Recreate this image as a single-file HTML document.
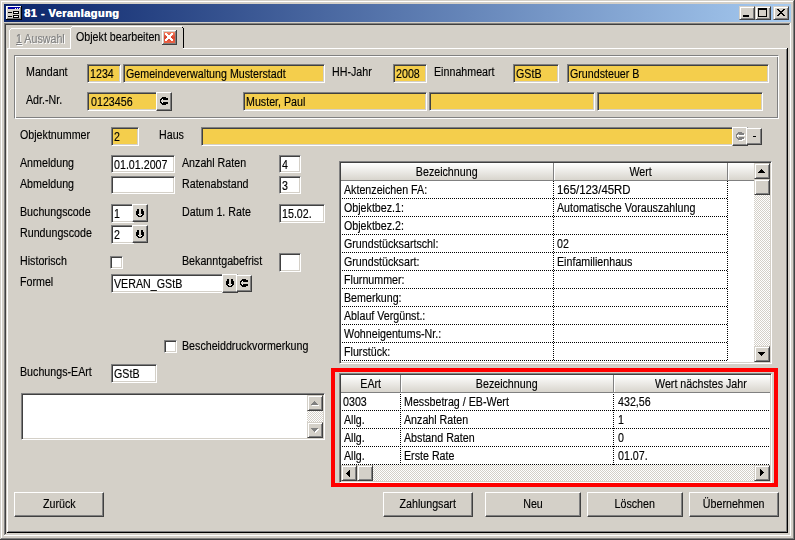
<!DOCTYPE html>
<html><head><meta charset="utf-8"><style>
html,body{margin:0;padding:0;width:795px;height:540px;overflow:hidden;background:#d4d0c8}
body>div,body>svg{position:absolute}
div{box-sizing:border-box}
.t{position:absolute;font-family:"Liberation Sans",sans-serif;font-size:12px;line-height:14px;white-space:nowrap;color:#000;transform:scaleX(0.89);transform-origin:0 0;-webkit-text-stroke:0.15px}
.c{position:absolute;font-family:"Liberation Sans",sans-serif;font-size:12px;line-height:14px;white-space:nowrap;color:#000;text-align:center;-webkit-text-stroke:0.15px}
.c span{display:inline-block;transform:scaleX(0.89);transform-origin:50% 0}
.sk{border:1px solid;border-color:#808080 #fff #fff #808080;box-shadow:inset 1px 1px #404040,inset -1px -1px #d4d0c8}
.rs{background:#d4d0c8;border:1px solid;border-color:#fff #404040 #404040 #fff;box-shadow:inset -1px -1px #808080}
.cb{background:#d4d0c8;border:1px solid;border-color:#d4d0c8 #404040 #404040 #d4d0c8;box-shadow:inset 1px 1px #fff,inset -1px -1px #808080}
.et{border:1px solid;border-color:#808080 #fff #fff #808080;box-shadow:inset 1px 1px #fff,inset -1px -1px #808080}
</style></head><body>
<div style="left:0;top:0;width:795px;height:540px;background:#d4d0c8"></div>
<div style="left:0px;top:0px;width:795px;height:1px;background:#d4d0c8"></div>
<div style="left:1px;top:1px;width:793px;height:1px;background:#ffffff"></div>
<div style="left:1px;top:1px;width:1px;height:538px;background:#ffffff"></div>
<div style="left:793px;top:1px;width:1px;height:538px;background:#808080"></div>
<div style="left:1px;top:538px;width:793px;height:1px;background:#808080"></div>
<div style="left:794px;top:0px;width:1px;height:540px;background:#404040"></div>
<div style="left:0px;top:539px;width:795px;height:1px;background:#404040"></div>
<div style="left:4px;top:4px;width:787px;height:18px;background:linear-gradient(to right,#0a246a,#a6caf0)"></div>
<div style="left:4px;top:23px;width:787px;height:1px;background:#808080"></div>
<div style="left:4px;top:23px;width:1px;height:513px;background:#808080"></div>
<div style="left:5px;top:24px;width:785px;height:1px;background:#404040"></div>
<div style="left:5px;top:24px;width:1px;height:511px;background:#404040"></div>
<div style="left:790px;top:23px;width:1px;height:513px;background:#ffffff"></div>
<div style="left:4px;top:535px;width:787px;height:1px;background:#ffffff"></div>
<div style="left:789px;top:24px;width:1px;height:511px;background:#d4d0c8"></div>
<div style="left:5px;top:534px;width:785px;height:1px;background:#d4d0c8"></div>
<svg style="position:absolute;left:6px;top:6px" width="16" height="14" shape-rendering="crispEdges">
<rect x="0" y="0" width="15" height="13" fill="#d4d0c8"/>
<rect x="0" y="0" width="15" height="1" fill="#ffffff"/><rect x="0" y="0" width="1" height="13" fill="#ffffff"/>
<rect x="15" y="0" width="1" height="14" fill="#000"/><rect x="0" y="13" width="16" height="1" fill="#000"/>
<rect x="14" y="1" width="1" height="12" fill="#808080"/><rect x="1" y="12" width="14" height="1" fill="#808080"/>
<rect x="2" y="1" width="12" height="2" fill="#0000a8"/>
<rect x="9" y="2" width="1" height="1" fill="#fff"/><rect x="11" y="2" width="1" height="1" fill="#fff"/><rect x="13" y="2" width="1" height="1" fill="#fff"/>
<rect x="2" y="6" width="4" height="1" fill="#000"/><rect x="7" y="5" width="6" height="3" fill="#000"/><rect x="8" y="6" width="4" height="1" fill="#fff"/>
<rect x="2" y="10" width="4" height="1" fill="#000"/><rect x="7" y="9" width="6" height="3" fill="#000"/><rect x="8" y="10" width="4" height="1" fill="#fff"/>
</svg>
<div style="left:24px;top:6px;font:bold 11px Liberation Sans;line-height:14px;color:#fff;letter-spacing:0.45px;text-shadow:0.5px 0 0 #fff;white-space:nowrap">81 - Veranlagung</div>
<div class="cb" style="left:739px;top:6px;width:16px;height:14px"></div>
<div class="cb" style="left:755px;top:6px;width:16px;height:14px"></div>
<div class="cb" style="left:773px;top:6px;width:16px;height:14px"></div>
<svg style="position:absolute;left:739px;top:6px" width="50" height="14" shape-rendering="crispEdges">
<rect x="4" y="9" width="6" height="2" fill="#000"/>
<rect x="19" y="2" width="9" height="9" fill="#000"/><rect x="20" y="4" width="7" height="6" fill="#d4d0c8"/>
<path d="M38 3 h2 v1 h1 v1 h2 v-1 h1 v-1 h2 v1 h-1 v1 h-1 v1 h-1 v1 h1 v1 h1 v1 h1 v1 h-2 v-1 h-1 v-1 h-2 v1 h-1 v1 h-2 v-1 h1 v-1 h1 v-1 h1 v-1 h-1 v-1 h-1 v-1 h-1 z" fill="#000"/>
</svg>
<div style="left:7px;top:48px;width:781px;height:1px;background:#ffffff"></div>
<div style="left:7px;top:48px;width:1px;height:485px;background:#ffffff"></div>
<div style="left:786px;top:49px;width:1px;height:483px;background:#808080"></div>
<div style="left:787px;top:48px;width:1px;height:485px;background:#000"></div>
<div style="left:8px;top:531px;width:779px;height:1px;background:#808080"></div>
<div style="left:7px;top:532px;width:781px;height:1px;background:#000"></div>
<div style="left:9px;top:30px;width:1px;height:18px;background:#ffffff"></div>
<div style="left:10px;top:29px;width:1px;height:1px;background:#ffffff"></div>
<div style="left:11px;top:28px;width:59px;height:1px;background:#ffffff"></div>
<div class="t" style="left:16px;top:32px;color:#808080;text-shadow:1px 1px #fff"><u>1</u> Auswahl</div>
<div style="left:7px;top:49px;width:1px;height:0px;"></div>
<div style="left:70px;top:28px;width:1px;height:21px;background:#ffffff"></div>
<div style="left:71px;top:27px;width:1px;height:1px;background:#ffffff"></div>
<div style="left:72px;top:26px;width:110px;height:1px;background:#ffffff"></div>
<div style="left:71px;top:48px;width:112px;height:1px;background:#d4d0c8"></div>
<div style="left:182px;top:27px;width:1px;height:1px;background:#000"></div>
<div style="left:183px;top:28px;width:1px;height:20px;background:#000"></div>
<div class="t" style="left:76px;top:30px;">Objekt bearbeiten</div>
<svg style="position:absolute;left:162px;top:30px" width="15" height="15" shape-rendering="crispEdges">
<defs><linearGradient id="rg" x1="0" y1="0" x2="0" y2="1"><stop offset="0" stop-color="#f48466"/><stop offset="0.5" stop-color="#d8452e"/><stop offset="1" stop-color="#ec6448"/></linearGradient></defs>
<rect x="0" y="0" width="15" height="15" fill="#404040"/>
<rect x="0" y="0" width="14" height="14" fill="#ffffff"/>
<rect x="1" y="1" width="13" height="13" fill="#808080"/>
<rect x="1" y="1" width="12" height="12" fill="#d4d0c8"/>
<rect x="2" y="2" width="11" height="11" fill="url(#rg)"/>
<g fill="#fff"><rect x="3" y="3" width="1" height="1"/><rect x="4" y="3" width="1" height="1"/><rect x="9" y="3" width="1" height="1"/><rect x="10" y="3" width="1" height="1"/><rect x="3" y="4" width="1" height="1"/><rect x="4" y="4" width="1" height="1"/><rect x="5" y="4" width="1" height="1"/><rect x="8" y="4" width="1" height="1"/><rect x="9" y="4" width="1" height="1"/><rect x="10" y="4" width="1" height="1"/><rect x="4" y="5" width="1" height="1"/><rect x="5" y="5" width="1" height="1"/><rect x="6" y="5" width="1" height="1"/><rect x="7" y="5" width="1" height="1"/><rect x="8" y="5" width="1" height="1"/><rect x="9" y="5" width="1" height="1"/><rect x="5" y="6" width="1" height="1"/><rect x="6" y="6" width="1" height="1"/><rect x="7" y="6" width="1" height="1"/><rect x="8" y="6" width="1" height="1"/><rect x="5" y="7" width="1" height="1"/><rect x="6" y="7" width="1" height="1"/><rect x="7" y="7" width="1" height="1"/><rect x="8" y="7" width="1" height="1"/><rect x="4" y="8" width="1" height="1"/><rect x="5" y="8" width="1" height="1"/><rect x="6" y="8" width="1" height="1"/><rect x="7" y="8" width="1" height="1"/><rect x="8" y="8" width="1" height="1"/><rect x="9" y="8" width="1" height="1"/><rect x="3" y="9" width="1" height="1"/><rect x="4" y="9" width="1" height="1"/><rect x="5" y="9" width="1" height="1"/><rect x="8" y="9" width="1" height="1"/><rect x="9" y="9" width="1" height="1"/><rect x="10" y="9" width="1" height="1"/><rect x="3" y="10" width="1" height="1"/><rect x="4" y="10" width="1" height="1"/><rect x="9" y="10" width="1" height="1"/><rect x="10" y="10" width="1" height="1"/></g>
</svg>
<div class="et" style="left:14px;top:55px;width:765px;height:64px"></div>
<div class="t" style="left:26px;top:65px;">Mandant</div>
<div class="sk" style="left:87px;top:64px;width:34px;height:19px;background:#f4ce4c"></div>
<div class="t" style="left:90px;top:67px;">1234</div>
<div class="sk" style="left:123px;top:64px;width:202px;height:19px;background:#f4ce4c"></div>
<div class="t" style="left:126px;top:67px;">Gemeindeverwaltung Musterstadt</div>
<div class="t" style="left:332px;top:65px;">HH-Jahr</div>
<div class="sk" style="left:393px;top:64px;width:34px;height:19px;background:#f4ce4c"></div>
<div class="t" style="left:396px;top:67px;">2008</div>
<div class="t" style="left:434px;top:65px;">Einnahmeart</div>
<div class="sk" style="left:513px;top:64px;width:46px;height:19px;background:#f4ce4c"></div>
<div class="t" style="left:516px;top:67px;">GStB</div>
<div class="sk" style="left:567px;top:64px;width:202px;height:19px;background:#f4ce4c"></div>
<div class="t" style="left:570px;top:67px;">Grundsteuer B</div>
<div class="t" style="left:26px;top:93px;">Adr.-Nr.</div>
<div class="sk" style="left:87px;top:92px;width:71px;height:19px;background:#f4ce4c"></div>
<div class="t" style="left:91px;top:95px;">0123456</div>
<div class="rs" style="left:156px;top:92px;width:16px;height:19px"></div>
<svg style="position:absolute;left:160px;top:97px" width="9" height="9" shape-rendering="crispEdges"><g fill="#000"><rect x="2" y="0" width="4" height="1"/><rect x="1" y="1" width="7" height="1"/><rect x="0" y="2" width="8" height="1"/><rect x="0" y="3" width="1" height="2"/><rect x="0" y="5" width="8" height="1"/><rect x="1" y="6" width="7" height="1"/><rect x="2" y="7" width="4" height="1"/></g><g fill="#fff"><rect x="2" y="2" width="1" height="1"/><rect x="2" y="5" width="1" height="1"/></g></svg>
<div class="sk" style="left:243px;top:92px;width:184px;height:19px;background:#f4ce4c"></div>
<div class="t" style="left:246px;top:95px;">Muster, Paul</div>
<div class="sk" style="left:429px;top:92px;width:166px;height:19px;background:#f4ce4c"></div>
<div class="sk" style="left:597px;top:92px;width:166px;height:19px;background:#f4ce4c"></div>
<div class="t" style="left:20px;top:128px;">Objektnummer</div>
<div class="sk" style="left:111px;top:127px;width:28px;height:19px;background:#f4ce4c"></div>
<div class="t" style="left:114px;top:130px;">2</div>
<div class="t" style="left:159px;top:128px;">Haus</div>
<div class="sk" style="left:201px;top:127px;width:533px;height:19px;background:#f4ce4c"></div>
<div class="rs" style="left:732px;top:127px;width:16px;height:19px"></div>
<svg style="position:absolute;left:736px;top:132px" width="9" height="9" shape-rendering="crispEdges"><g fill="#fff" transform="translate(1,1)"><g><rect x="2" y="0" width="4" height="1"/><rect x="1" y="1" width="7" height="1"/><rect x="0" y="2" width="8" height="1"/><rect x="0" y="3" width="1" height="2"/><rect x="0" y="5" width="8" height="1"/><rect x="1" y="6" width="7" height="1"/><rect x="2" y="7" width="4" height="1"/></g></g><g fill="#808080"><rect x="2" y="0" width="4" height="1"/><rect x="1" y="1" width="7" height="1"/><rect x="0" y="2" width="8" height="1"/><rect x="0" y="3" width="1" height="2"/><rect x="0" y="5" width="8" height="1"/><rect x="1" y="6" width="7" height="1"/><rect x="2" y="7" width="4" height="1"/></g><g fill="#d4d0c8"><rect x="2" y="2" width="1" height="1"/><rect x="2" y="5" width="1" height="1"/></g></svg>
<div class="rs" style="left:746px;top:128px;width:16px;height:17px"></div>
<div style="left:753px;top:136px;width:3px;height:1px;background:#000"></div>
<div class="t" style="left:20px;top:156px;">Anmeldung</div>
<div class="sk" style="left:111px;top:155px;width:64px;height:18px;background:#ffffff"></div>
<div class="t" style="left:114px;top:158px;">01.01.2007</div>
<div class="t" style="left:20px;top:177px;">Abmeldung</div>
<div class="sk" style="left:111px;top:176px;width:64px;height:18px;background:#ffffff"></div>
<div class="t" style="left:182px;top:156px;">Anzahl Raten</div>
<div class="sk" style="left:279px;top:155px;width:22px;height:18px;background:#ffffff"></div>
<div class="t" style="left:282px;top:158px;">4</div>
<div class="t" style="left:182px;top:177px;">Ratenabstand</div>
<div class="sk" style="left:279px;top:176px;width:22px;height:18px;background:#ffffff"></div>
<div class="t" style="left:282px;top:179px;">3</div>
<div class="t" style="left:20px;top:205px;">Buchungscode</div>
<div class="sk" style="left:111px;top:204px;width:23px;height:19px;background:#ffffff"></div>
<div class="t" style="left:114px;top:207px;">1</div>
<div class="rs" style="left:132px;top:204px;width:16px;height:18px"></div>
<svg style="position:absolute;left:136px;top:209px" width="9" height="9" shape-rendering="crispEdges"><g fill="#000" transform="rotate(-90 4 4)"><rect x="2" y="0" width="4" height="1"/><rect x="1" y="1" width="7" height="1"/><rect x="0" y="2" width="8" height="1"/><rect x="0" y="3" width="1" height="2"/><rect x="0" y="5" width="8" height="1"/><rect x="1" y="6" width="7" height="1"/><rect x="2" y="7" width="4" height="1"/></g><g fill="#fff" transform="rotate(-90 4 4)"><rect x="2" y="2" width="1" height="1"/><rect x="2" y="5" width="1" height="1"/></g></svg>
<div class="t" style="left:20px;top:226px;">Rundungscode</div>
<div class="sk" style="left:111px;top:225px;width:23px;height:19px;background:#ffffff"></div>
<div class="t" style="left:114px;top:228px;">2</div>
<div class="rs" style="left:132px;top:225px;width:16px;height:18px"></div>
<svg style="position:absolute;left:136px;top:230px" width="9" height="9" shape-rendering="crispEdges"><g fill="#000" transform="rotate(-90 4 4)"><rect x="2" y="0" width="4" height="1"/><rect x="1" y="1" width="7" height="1"/><rect x="0" y="2" width="8" height="1"/><rect x="0" y="3" width="1" height="2"/><rect x="0" y="5" width="8" height="1"/><rect x="1" y="6" width="7" height="1"/><rect x="2" y="7" width="4" height="1"/></g><g fill="#fff" transform="rotate(-90 4 4)"><rect x="2" y="2" width="1" height="1"/><rect x="2" y="5" width="1" height="1"/></g></svg>
<div class="t" style="left:182px;top:205px;">Datum 1. Rate</div>
<div class="sk" style="left:279px;top:204px;width:46px;height:19px;background:#ffffff"></div>
<div class="t" style="left:282px;top:207px;">15.02.</div>
<div class="t" style="left:20px;top:254px;">Historisch</div>
<div class="sk" style="left:110px;top:256px;width:13px;height:13px;background:#ffffff"></div>
<div class="t" style="left:182px;top:254px;">Bekanntgabefrist</div>
<div class="sk" style="left:279px;top:253px;width:22px;height:19px;background:#ffffff"></div>
<div class="t" style="left:20px;top:275px;">Formel</div>
<div class="sk" style="left:111px;top:274px;width:113px;height:19px;background:#ffffff"></div>
<div class="t" style="left:114px;top:277px;">VERAN_GStB</div>
<div class="rs" style="left:222px;top:274px;width:16px;height:19px"></div>
<svg style="position:absolute;left:226px;top:279px" width="9" height="9" shape-rendering="crispEdges"><g fill="#000" transform="rotate(-90 4 4)"><rect x="2" y="0" width="4" height="1"/><rect x="1" y="1" width="7" height="1"/><rect x="0" y="2" width="8" height="1"/><rect x="0" y="3" width="1" height="2"/><rect x="0" y="5" width="8" height="1"/><rect x="1" y="6" width="7" height="1"/><rect x="2" y="7" width="4" height="1"/></g><g fill="#fff" transform="rotate(-90 4 4)"><rect x="2" y="2" width="1" height="1"/><rect x="2" y="5" width="1" height="1"/></g></svg>
<div class="rs" style="left:236px;top:275px;width:16px;height:17px"></div>
<svg style="position:absolute;left:240px;top:279px" width="9" height="9" shape-rendering="crispEdges"><g fill="#000"><rect x="2" y="0" width="4" height="1"/><rect x="1" y="1" width="7" height="1"/><rect x="0" y="2" width="8" height="1"/><rect x="0" y="3" width="1" height="2"/><rect x="0" y="5" width="8" height="1"/><rect x="1" y="6" width="7" height="1"/><rect x="2" y="7" width="4" height="1"/></g><g fill="#fff"><rect x="2" y="2" width="1" height="1"/><rect x="2" y="5" width="1" height="1"/></g></svg>
<div class="sk" style="left:164px;top:340px;width:13px;height:13px;background:#ffffff"></div>
<div class="t" style="left:182px;top:339px;">Bescheiddruckvormerkung</div>
<div class="t" style="left:20px;top:365px;">Buchungs-EArt</div>
<div class="sk" style="left:111px;top:364px;width:46px;height:19px;background:#ffffff"></div>
<div class="t" style="left:114px;top:367px;">GStB</div>
<div class="sk" style="left:21px;top:393px;width:304px;height:47px;background:#ffffff"></div>
<div class="rs" style="left:14px;top:492px;width:90px;height:25px"></div>
<div class="c" style="left:14px;top:497px;width:90px"><span>Zurück</span></div>
<div class="rs" style="left:383px;top:492px;width:90px;height:25px"></div>
<div class="c" style="left:383px;top:497px;width:90px"><span>Zahlungsart</span></div>
<div class="rs" style="left:485px;top:492px;width:96px;height:25px"></div>
<div class="c" style="left:485px;top:497px;width:96px"><span>Neu</span></div>
<div class="rs" style="left:587px;top:492px;width:96px;height:25px"></div>
<div class="c" style="left:587px;top:497px;width:96px"><span>Löschen</span></div>
<div class="rs" style="left:689px;top:492px;width:90px;height:25px"></div>
<div class="c" style="left:689px;top:497px;width:90px"><span>Übernehmen</span></div>
<div style="left:331px;top:368px;width:447px;height:119px;box-sizing:border-box;border:4px solid #ff0000"></div>
<div class="sk" style="left:339px;top:161px;width:433px;height:203px;background:#ffffff"></div>
<div style="left:341px;top:163px;width:413px;height:17px;background:linear-gradient(#ffffff,#d8d5cd)"></div>
<div style="left:341px;top:180px;width:413px;height:1px;background:#808080"></div>
<div style="left:553px;top:163px;width:1px;height:17px;background:#808080"></div>
<div style="left:554px;top:163px;width:1px;height:17px;background:#ffffff"></div>
<div style="left:727px;top:163px;width:1px;height:17px;background:#808080"></div>
<div style="left:728px;top:163px;width:1px;height:17px;background:#ffffff"></div>
<div class="c" style="left:341px;top:165px;width:212px"><span>Bezeichnung</span></div>
<div class="c" style="left:554px;top:165px;width:173px"><span>Wert</span></div>
<div class="t" style="left:344px;top:183px;">Aktenzeichen FA:</div>
<div class="t" style="left:557px;top:183px;transform:scaleX(0.95)">165/123/45RD</div>
<div style="left:342px;top:198px;width:386px;height:1px;background:repeating-linear-gradient(to right,#000 0 1px,transparent 1px 2px)"></div>
<div class="t" style="left:344px;top:201px;">Objektbez.1:</div>
<div class="t" style="left:557px;top:201px;">Automatische Vorauszahlung</div>
<div style="left:342px;top:216px;width:386px;height:1px;background:repeating-linear-gradient(to right,#000 0 1px,transparent 1px 2px)"></div>
<div class="t" style="left:344px;top:219px;">Objektbez.2:</div>
<div style="left:342px;top:234px;width:386px;height:1px;background:repeating-linear-gradient(to right,#000 0 1px,transparent 1px 2px)"></div>
<div class="t" style="left:344px;top:237px;">Grundstücksartschl:</div>
<div class="t" style="left:557px;top:237px;">02</div>
<div style="left:342px;top:252px;width:386px;height:1px;background:repeating-linear-gradient(to right,#000 0 1px,transparent 1px 2px)"></div>
<div class="t" style="left:344px;top:255px;">Grundstücksart:</div>
<div class="t" style="left:557px;top:255px;">Einfamilienhaus</div>
<div style="left:342px;top:270px;width:386px;height:1px;background:repeating-linear-gradient(to right,#000 0 1px,transparent 1px 2px)"></div>
<div class="t" style="left:344px;top:273px;">Flurnummer:</div>
<div style="left:342px;top:288px;width:386px;height:1px;background:repeating-linear-gradient(to right,#000 0 1px,transparent 1px 2px)"></div>
<div class="t" style="left:344px;top:291px;">Bemerkung:</div>
<div style="left:342px;top:306px;width:386px;height:1px;background:repeating-linear-gradient(to right,#000 0 1px,transparent 1px 2px)"></div>
<div class="t" style="left:344px;top:309px;">Ablauf Vergünst.:</div>
<div style="left:342px;top:324px;width:386px;height:1px;background:repeating-linear-gradient(to right,#000 0 1px,transparent 1px 2px)"></div>
<div class="t" style="left:344px;top:327px;">Wohneigentums-Nr.:</div>
<div style="left:342px;top:342px;width:386px;height:1px;background:repeating-linear-gradient(to right,#000 0 1px,transparent 1px 2px)"></div>
<div class="t" style="left:344px;top:345px;">Flurstück:</div>
<div style="left:342px;top:360px;width:386px;height:1px;background:repeating-linear-gradient(to right,#000 0 1px,transparent 1px 2px)"></div>
<div style="left:553px;top:181px;width:1px;height:180px;background:repeating-linear-gradient(to bottom,#000 0 1px,transparent 1px 2px)"></div>
<div style="left:727px;top:181px;width:1px;height:180px;background:repeating-linear-gradient(to bottom,#000 0 1px,transparent 1px 2px)"></div>
<div style="left:754px;top:195px;width:16px;height:151px;background:repeating-conic-gradient(#ffffff 0 25%,#d4d0c8 0 50%) 0 0/2px 2px;background-position:0 1px"></div>
<div class="cb" style="left:754px;top:163px;width:16px;height:16px"></div>
<div class="cb" style="left:754px;top:179px;width:16px;height:16px"></div>
<div class="cb" style="left:754px;top:346px;width:16px;height:16px"></div>
<svg style="position:absolute;left:754px;top:163px" width="16" height="16" shape-rendering="crispEdges"><path d="M4 10 h7 v-1 h-1 v-1 h-1 v-1 h-1 v-1 h-1 v1 h-1 v1 h-1 v1 h-1 z" fill="#000"/></svg>
<svg style="position:absolute;left:754px;top:346px" width="16" height="16" shape-rendering="crispEdges"><path d="M4 6 h7 v1 h-1 v1 h-1 v1 h-1 v1 h-1 v-1 h-1 v-1 h-1 v-1 h-1 z" fill="#000"/></svg>
<div class="sk" style="left:339px;top:373px;width:433px;height:110px;background:#ffffff"></div>
<div style="left:341px;top:375px;width:429px;height:17px;background:linear-gradient(#ffffff,#d8d5cd)"></div>
<div style="left:341px;top:392px;width:429px;height:1px;background:#808080"></div>
<div style="left:400px;top:375px;width:1px;height:17px;background:#808080"></div>
<div style="left:401px;top:375px;width:1px;height:17px;background:#ffffff"></div>
<div style="left:613px;top:375px;width:1px;height:17px;background:#808080"></div>
<div style="left:614px;top:375px;width:1px;height:17px;background:#ffffff"></div>
<div class="c" style="left:341px;top:377px;width:59px"><span>EArt</span></div>
<div class="c" style="left:401px;top:377px;width:212px"><span>Bezeichnung</span></div>
<div class="t" style="left:655px;top:377px;">Wert nächstes Jahr</div>
<div class="t" style="left:343px;top:395px;">0303</div>
<div class="t" style="left:404px;top:395px;">Messbetrag / EB-Wert</div>
<div class="t" style="left:618px;top:395px;">432,56</div>
<div style="left:342px;top:410px;width:428px;height:1px;background:repeating-linear-gradient(to right,#000 0 1px,transparent 1px 2px)"></div>
<div class="t" style="left:344px;top:413px;">Allg.</div>
<div class="t" style="left:404px;top:413px;">Anzahl Raten</div>
<div class="t" style="left:618px;top:413px;">1</div>
<div style="left:342px;top:428px;width:428px;height:1px;background:repeating-linear-gradient(to right,#000 0 1px,transparent 1px 2px)"></div>
<div class="t" style="left:344px;top:431px;">Allg.</div>
<div class="t" style="left:404px;top:431px;">Abstand Raten</div>
<div class="t" style="left:618px;top:431px;">0</div>
<div style="left:342px;top:446px;width:428px;height:1px;background:repeating-linear-gradient(to right,#000 0 1px,transparent 1px 2px)"></div>
<div class="t" style="left:344px;top:449px;">Allg.</div>
<div class="t" style="left:404px;top:449px;">Erste Rate</div>
<div class="t" style="left:618px;top:449px;">01.07.</div>
<div style="left:342px;top:464px;width:428px;height:1px;background:repeating-linear-gradient(to right,#000 0 1px,transparent 1px 2px)"></div>
<div style="left:400px;top:394px;width:1px;height:71px;background:repeating-linear-gradient(to bottom,#000 0 1px,transparent 1px 2px)"></div>
<div style="left:613px;top:394px;width:1px;height:71px;background:repeating-linear-gradient(to bottom,#000 0 1px,transparent 1px 2px)"></div>
<div style="left:373px;top:465px;width:381px;height:16px;background:repeating-conic-gradient(#ffffff 0 25%,#d4d0c8 0 50%) 0 0/2px 2px"></div>
<div class="cb" style="left:341px;top:465px;width:16px;height:16px"></div>
<div class="cb" style="left:357px;top:465px;width:16px;height:16px"></div>
<div class="cb" style="left:754px;top:465px;width:16px;height:16px"></div>
<svg style="position:absolute;left:341px;top:465px" width="16" height="16" shape-rendering="crispEdges"><path d="M5 8 h1 v-1 h1 v-1 h1 v-1 h1 v7 h-1 v-1 h-1 v-1 h-1 v-1 h-1 z" fill="#000"/></svg>
<svg style="position:absolute;left:754px;top:465px" width="16" height="16" shape-rendering="crispEdges"><path d="M6 4 h1 v1 h1 v1 h1 v1 h1 v1 h-1 v1 h-1 v1 h-1 v1 h-1 z" fill="#000"/></svg>
<div style="left:307px;top:411px;width:16px;height:11px;background:repeating-conic-gradient(#ffffff 0 25%,#d4d0c8 0 50%) 0 0/2px 2px"></div>
<div class="cb" style="left:307px;top:395px;width:16px;height:16px"></div>
<div class="cb" style="left:307px;top:422px;width:16px;height:16px"></div>
<svg style="position:absolute;left:307px;top:395px" width="16" height="16" shape-rendering="crispEdges"><path d="M5 11 h7 v-1 h-1 v-1 h-1 v-1 h-1 v-1 h-1 v1 h-1 v1 h-1 v1 h-1 z" fill="#fff"/><path d="M4 10 h7 v-1 h-1 v-1 h-1 v-1 h-1 v-1 h-1 v1 h-1 v1 h-1 v1 h-1 z" fill="#808080"/></svg>
<svg style="position:absolute;left:307px;top:422px" width="16" height="16" shape-rendering="crispEdges"><path d="M5 7 h7 v1 h-1 v1 h-1 v1 h-1 v1 h-1 v-1 h-1 v-1 h-1 v-1 h-1 z" fill="#fff"/><path d="M4 6 h7 v1 h-1 v1 h-1 v1 h-1 v1 h-1 v-1 h-1 v-1 h-1 v-1 h-1 z" fill="#808080"/></svg>
</body></html>
